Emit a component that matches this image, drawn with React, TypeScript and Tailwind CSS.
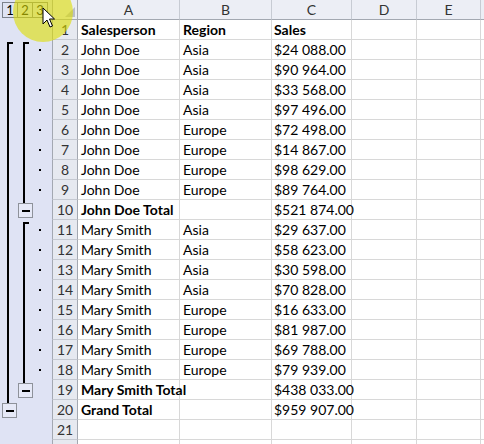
import React from "react";

type Row = {
  n: number;
  a?: string;
  b?: string;
  c?: string;
  bold?: boolean;
  hideNum?: boolean;
};

const rows: Row[] = [
  { n: 1, a: "Salesperson", b: "Region", c: "Sales", bold: true },
  { n: 2, a: "John Doe", b: "Asia", c: "$24 088.00" },
  { n: 3, a: "John Doe", b: "Asia", c: "$90 964.00" },
  { n: 4, a: "John Doe", b: "Asia", c: "$33 568.00" },
  { n: 5, a: "John Doe", b: "Asia", c: "$97 496.00" },
  { n: 6, a: "John Doe", b: "Europe", c: "$72 498.00" },
  { n: 7, a: "John Doe", b: "Europe", c: "$14 867.00" },
  { n: 8, a: "John Doe", b: "Europe", c: "$98 629.00" },
  { n: 9, a: "John Doe", b: "Europe", c: "$89 764.00" },
  { n: 10, a: "John Doe Total", c: "$521 874.00", bold: true },
  { n: 11, a: "Mary Smith", b: "Asia", c: "$29 637.00" },
  { n: 12, a: "Mary Smith", b: "Asia", c: "$58 623.00" },
  { n: 13, a: "Mary Smith", b: "Asia", c: "$30 598.00" },
  { n: 14, a: "Mary Smith", b: "Asia", c: "$70 828.00" },
  { n: 15, a: "Mary Smith", b: "Europe", c: "$16 633.00" },
  { n: 16, a: "Mary Smith", b: "Europe", c: "$81 987.00" },
  { n: 17, a: "Mary Smith", b: "Europe", c: "$69 788.00" },
  { n: 18, a: "Mary Smith", b: "Europe", c: "$79 939.00" },
  { n: 19, a: "Mary Smith Total", c: "$438 033.00", bold: true },
  { n: 20, a: "Grand Total", c: "$959 907.00", bold: true },
  { n: 21 },
  { n: 22, hideNum: true },
];

const detailRows = [2, 3, 4, 5, 6, 7, 8, 9, 11, 12, 13, 14, 15, 16, 17, 18];

// grid column widths (A..E)
const cols = [
  { key: "A", w: "w-[102px]" },
  { key: "B", w: "w-[92px]" },
  { key: "C", w: "w-[80px]" },
  { key: "D", w: "w-[65px]" },
  { key: "E", w: "w-[64px]" },
];

function OutlineBars() {
  const bar = "#000000";
  const btn = "#8e929a";
  const top = (n: number) => 20 * n - 20; // svg starts under header row
  return (
    <svg width="52" height="424" viewBox="0 0 52 424">
      {/* level 1 */}
      <rect x="7" y="22" width="2" height="361" fill={bar} />
      <rect x="7" y="22" width="6" height="2" fill={bar} />
      <rect x="2.5" y="383.5" width="14" height="14" fill="#e6e9f7" stroke={btn} />
      <rect x="6" y="390" width="8" height="2" fill={bar} />

      {/* level 2: John Doe */}
      <rect x="23" y="22" width="2" height="161" fill={bar} />
      <rect x="23" y="22" width="6" height="2" fill={bar} />
      <rect x="18.5" y="183.5" width="14" height="14" fill="#e6e9f7" stroke={btn} />
      <rect x="22" y="190" width="8" height="2" fill={bar} />

      {/* level 2: Mary Smith */}
      <rect x="23" y="202" width="2" height="161" fill={bar} />
      <rect x="23" y="202" width="6" height="2" fill={bar} />
      <rect x="18.5" y="363.5" width="14" height="14" fill="#e6e9f7" stroke={btn} />
      <rect x="22" y="370" width="8" height="2" fill={bar} />

      {detailRows.map((n) => (
        <rect key={n} x="39" y={top(n) + 9} width="2" height="2" fill={bar} />
      ))}
    </svg>
  );
}

export default function App() {
  return (
    <div className="relative w-[484px] h-[444px] overflow-hidden bg-white font-['Lato','Liberation_Sans',sans-serif] text-[14px] text-black flex">
      {/* Outline panel */}
      <div className="w-[52px] shrink-0 bg-[#dfe3f4] flex flex-col">
        <div className="h-[20px] pl-[2px] pt-[2px] flex items-start">
          {[1, 2, 3].map((l, i) => (
            <div
              key={l}
              className={`h-[16px] border-y border-l border-[#7d828c] flex items-center justify-center text-[13px] leading-none text-black ${
                i === 2 ? "w-[16px] border-r" : "w-[15px]"
              }`}
            >
              {l}
            </div>
          ))}
        </div>
        <OutlineBars />
      </div>

      {/* Sheet */}
      <div className="flex-1 flex flex-col">
        {/* column header */}
        <div className="flex h-[20px] shrink-0">
          <div className="w-[26px] shrink-0 bg-[#e9ecf3] border-l border-b border-r border-[#a3a8b1] flex items-end justify-end p-[2px]">
            <svg width="10" height="10" viewBox="0 0 10 10">
              <polygon points="10,0 10,10 0,10" fill="#b9bec7" />
            </svg>
          </div>
          {cols.map((c) => (
            <div
              key={c.key}
              className={`${c.w} shrink-0 bg-[#eceef5] border-r border-r-[#c7cbd3] border-b border-b-[#a3a8b1] flex items-center justify-center text-[#333]`}
            >
              {c.key}
            </div>
          ))}
          <div className="flex-1 bg-[#eceef5] border-b border-[#a3a8b1]" />
        </div>

        {rows.map((r) => (
          <div key={r.n} className="flex h-[20px] shrink-0">
            <div className="w-[26px] shrink-0 bg-[#e6e9f0] border-l border-l-[#a3a8b1] border-r border-r-[#a3a8b1] border-b border-b-[#c5c9d1] flex items-center justify-center text-[#333]">
              {r.hideNum ? "" : r.n}
            </div>
            <div className={`${cols[0].w} shrink-0 border-r border-b border-[#d8d8d8] pl-[3px] flex items-center whitespace-nowrap ${r.bold ? "font-bold" : ""}`}>
              {r.a}
            </div>
            <div className={`${cols[1].w} shrink-0 border-r border-b border-[#d8d8d8] pl-[3px] flex items-center whitespace-nowrap ${r.n === 1 ? "font-bold" : ""}`}>
              {r.b}
            </div>
            <div className={`${cols[2].w} shrink-0 border-r border-b border-[#d8d8d8] pl-[2px] flex items-center whitespace-nowrap ${r.n === 1 ? "font-bold" : ""}`}>
              {r.c}
            </div>
            <div className={`${cols[3].w} shrink-0 border-r border-b border-[#d8d8d8]`} />
            <div className={`${cols[4].w} shrink-0 border-r border-b border-[#d8d8d8]`} />
            <div className="flex-1 border-b border-[#d8d8d8]" />
          </div>
        ))}
      </div>

      {/* cursor highlight */}
      <div className="absolute left-[13px] top-[-18px] w-[60px] h-[60px] rounded-full bg-[rgba(222,222,0,0.6)] pointer-events-none" />
      {/* mouse cursor */}
      <svg className="absolute left-[42px] top-[7px]" width="14" height="22" viewBox="0 0 14 22">
        <path
          d="M1 1 L1 17 L5 13 L8 20 L10.5 19 L7.5 12 L12.5 12 Z"
          fill="#ffffff"
          stroke="#000000"
          strokeWidth="1"
          strokeLinejoin="round"
        />
      </svg>
    </div>
  );
}
